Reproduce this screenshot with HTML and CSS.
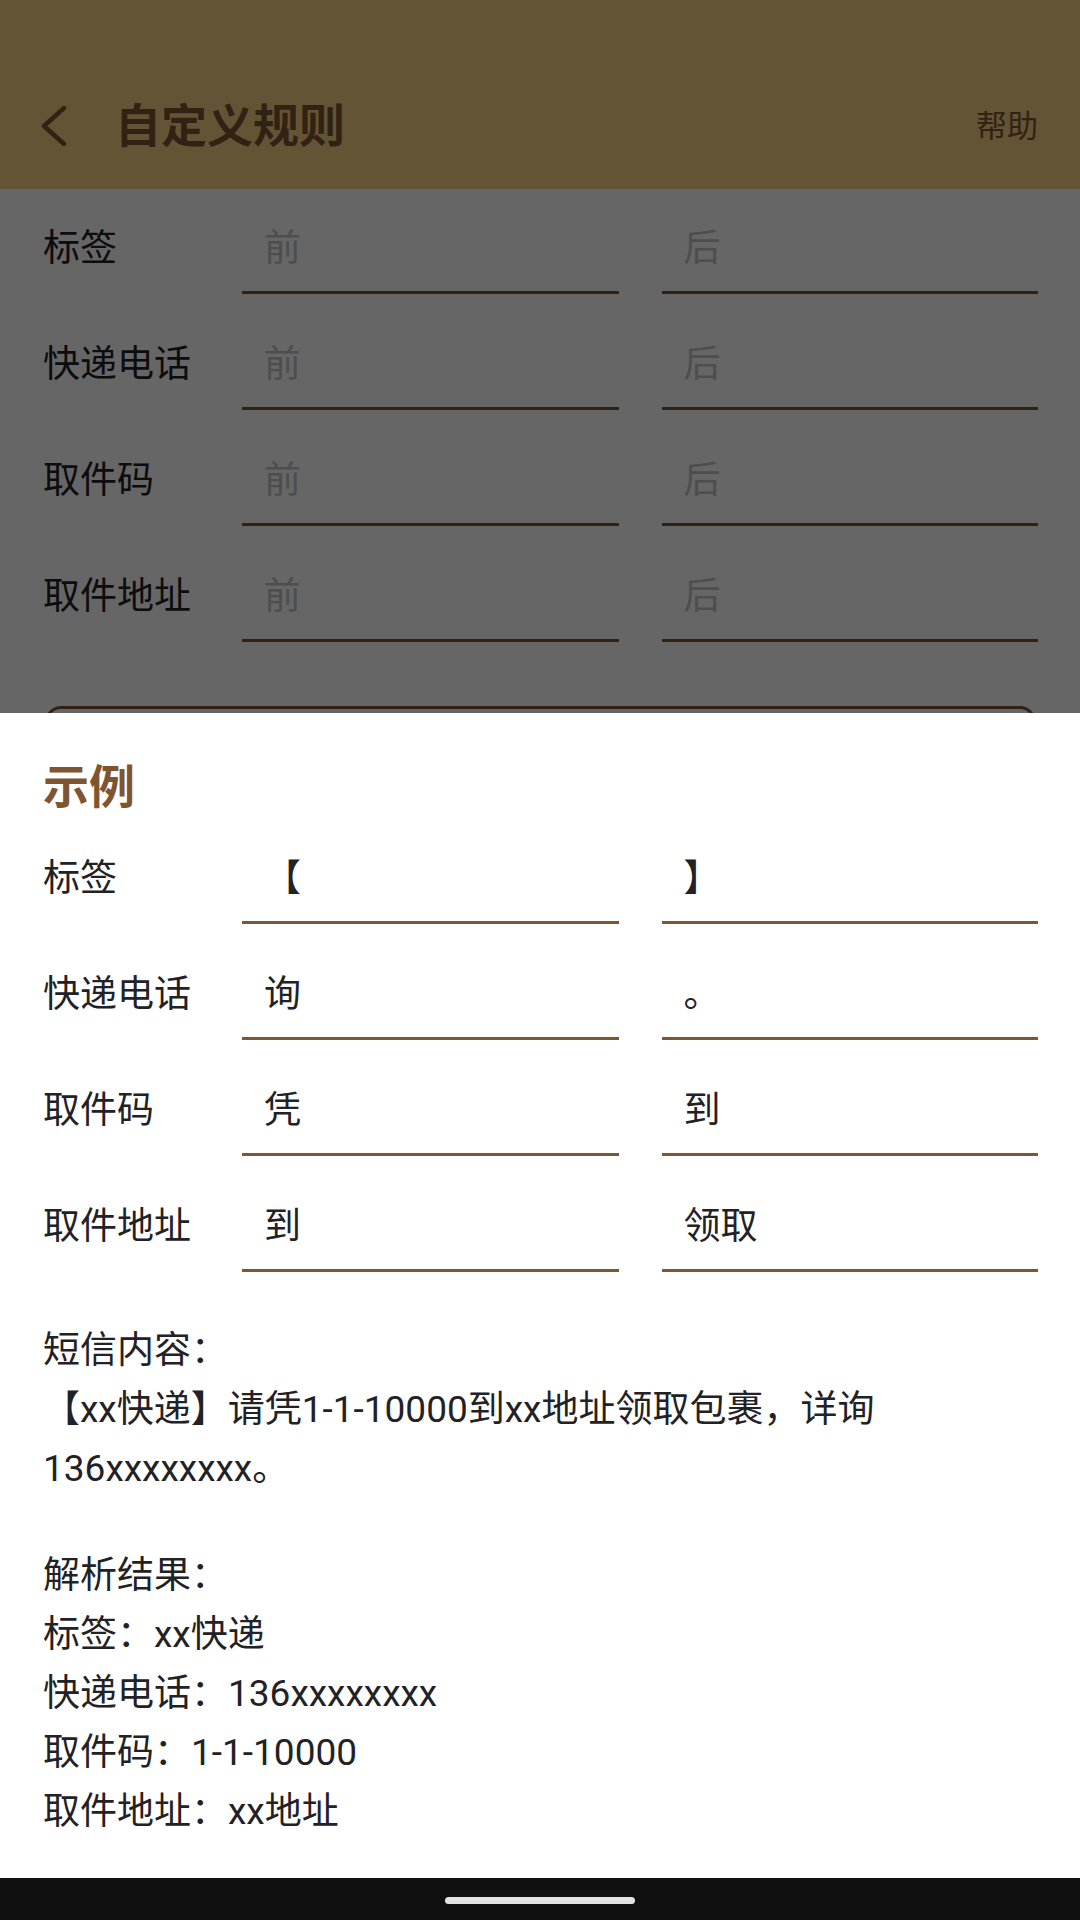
FILE: index.html
```html
<!DOCTYPE html>
<html lang="zh-CN">
<head>
<meta charset="utf-8">
<title>自定义规则</title>
<link rel="stylesheet" href="styles.css">
</head>
<body>
<div class="app">
  <header class="appbar">
    <div class="toolbar">
      <svg class="back" viewBox="0 0 28 40" width="28" height="40" aria-hidden="true">
        <path d="M24 2 L4 20 L24 38" fill="none" stroke="currentColor" stroke-width="4.5" stroke-linecap="round" stroke-linejoin="round"/>
      </svg>
      <h1 class="title">自定义规则</h1>
      <span class="help">帮助</span>
    </div>
  </header>

  <main class="form">
    <div class="rows">
      <div class="row"><span class="label">标签</span><div class="field placeholder">前</div><div class="field placeholder">后</div></div>
      <div class="row"><span class="label">快递电话</span><div class="field placeholder">前</div><div class="field placeholder">后</div></div>
      <div class="row"><span class="label">取件码</span><div class="field placeholder">前</div><div class="field placeholder">后</div></div>
      <div class="row"><span class="label">取件地址</span><div class="field placeholder">前</div><div class="field placeholder">后</div></div>
    </div>
    <div class="save-btn">保存</div>
  </main>

  <div class="navbar"><span class="pill"></span></div>

  <div class="scrim"></div>

  <section class="sheet">
    <h2 class="sheet-title">示例</h2>
    <div class="rows sheet-rows">
      <div class="row"><span class="label">标签</span><div class="field">【</div><div class="field">】</div></div>
      <div class="row"><span class="label">快递电话</span><div class="field">询</div><div class="field">。</div></div>
      <div class="row"><span class="label">取件码</span><div class="field">凭</div><div class="field">到</div></div>
      <div class="row"><span class="label">取件地址</span><div class="field">到</div><div class="field">领取</div></div>
    </div>
    <p class="text sms">短信内容：<br>【xx快递】请凭1-1-10000到xx地址领取包裹，详询136xxxxxxxx。</p>
    <p class="text result">解析结果：<br>标签：xx快递<br>快递电话：136xxxxxxxx<br>取件码：1-1-10000<br>取件地址：xx地址</p>
  </section>
</div>
</body>
</html>
```

FILE: styles.css
```css
* { box-sizing: border-box; }

html, body {
  margin: 0;
  padding: 0;
}

body {
  width: 1080px;
  height: 1920px;
  overflow: hidden;
  font-family: Roboto, "Noto Sans CJK SC", "Noto Sans", sans-serif;
  color: #222226;
  background: #ffffff;
}

.app {
  position: relative;
  width: 1080px;
  height: 1920px;
  display: flex;
  flex-direction: column;
  overflow: hidden;
}

/* ---------- app bar ---------- */
.appbar {
  background: #fad287;
  padding-top: 63px;
  flex: none;
}

.toolbar {
  height: 126px;
  display: flex;
  align-items: center;
  padding: 0 42px 0 40px;
  color: #7e5530;
}

.back {
  display: block;
  flex: none;
}

.title {
  margin: 0 0 0 47px;
  font-size: 46px;
  line-height: 1;
  font-weight: 700;
  color: #7e5530;
}

.help {
  margin-left: auto;
  font-size: 31px;
  line-height: 1;
  color: #7e5530;
}

/* ---------- form ---------- */
.form {
  flex: 1;
  padding: 14px 42px 0 43px;
  overflow: hidden;
}

.rows {
  display: flex;
  flex-direction: column;
  gap: 25px;
}

.row {
  display: grid;
  grid-template-columns: 156px 1fr 1fr;
  column-gap: 43px;
  align-items: start;
}

.label {
  padding-top: 22px;
  font-size: 37px;
  line-height: 48px;
  color: #222226;
  white-space: nowrap;
}

.field {
  padding: 22px 0 18px 22px;
  font-size: 37px;
  line-height: 48px;
  height: 91px;
  border-bottom: 3px solid #7d5632;
  color: #222226;
}

.field.placeholder {
  color: #c4c4c4;
}

.save-btn {
  margin: 64px 2px 0 2px;
  height: 130px;
  border: 3px solid #7e5530;
  border-radius: 16px;
  display: flex;
  align-items: center;
  justify-content: center;
  font-size: 37px;
  color: #7e5530;
}

/* ---------- system nav bar ---------- */
.navbar {
  flex: none;
  height: 42px;
  background: #101010;
  display: flex;
  justify-content: center;
  padding-top: 19px;
}

.pill {
  width: 190px;
  height: 7px;
  border-radius: 4px;
  background: #e2e2e2;
}

/* ---------- modal scrim + bottom sheet ---------- */
.scrim {
  position: absolute;
  top: 0;
  left: 0;
  right: 0;
  bottom: 42px;
  background: rgba(0, 0, 0, 0.6);
}

.sheet {
  position: absolute;
  top: 713px;
  left: 0;
  right: 0;
  bottom: 42px;
  background: #ffffff;
  padding: 44px 42px 0 43px;
}

.sheet-title {
  margin: 0;
  font-size: 46px;
  line-height: 60px;
  font-weight: 700;
  color: #7e5530;
}

.sheet-rows {
  margin-top: 16px;
}

.text {
  margin: 0;
  font-size: 37px;
  line-height: 59px;
  color: #222226;
}

.sms {
  margin-top: 49px;
}

.result {
  margin-top: 48px;
}
```
